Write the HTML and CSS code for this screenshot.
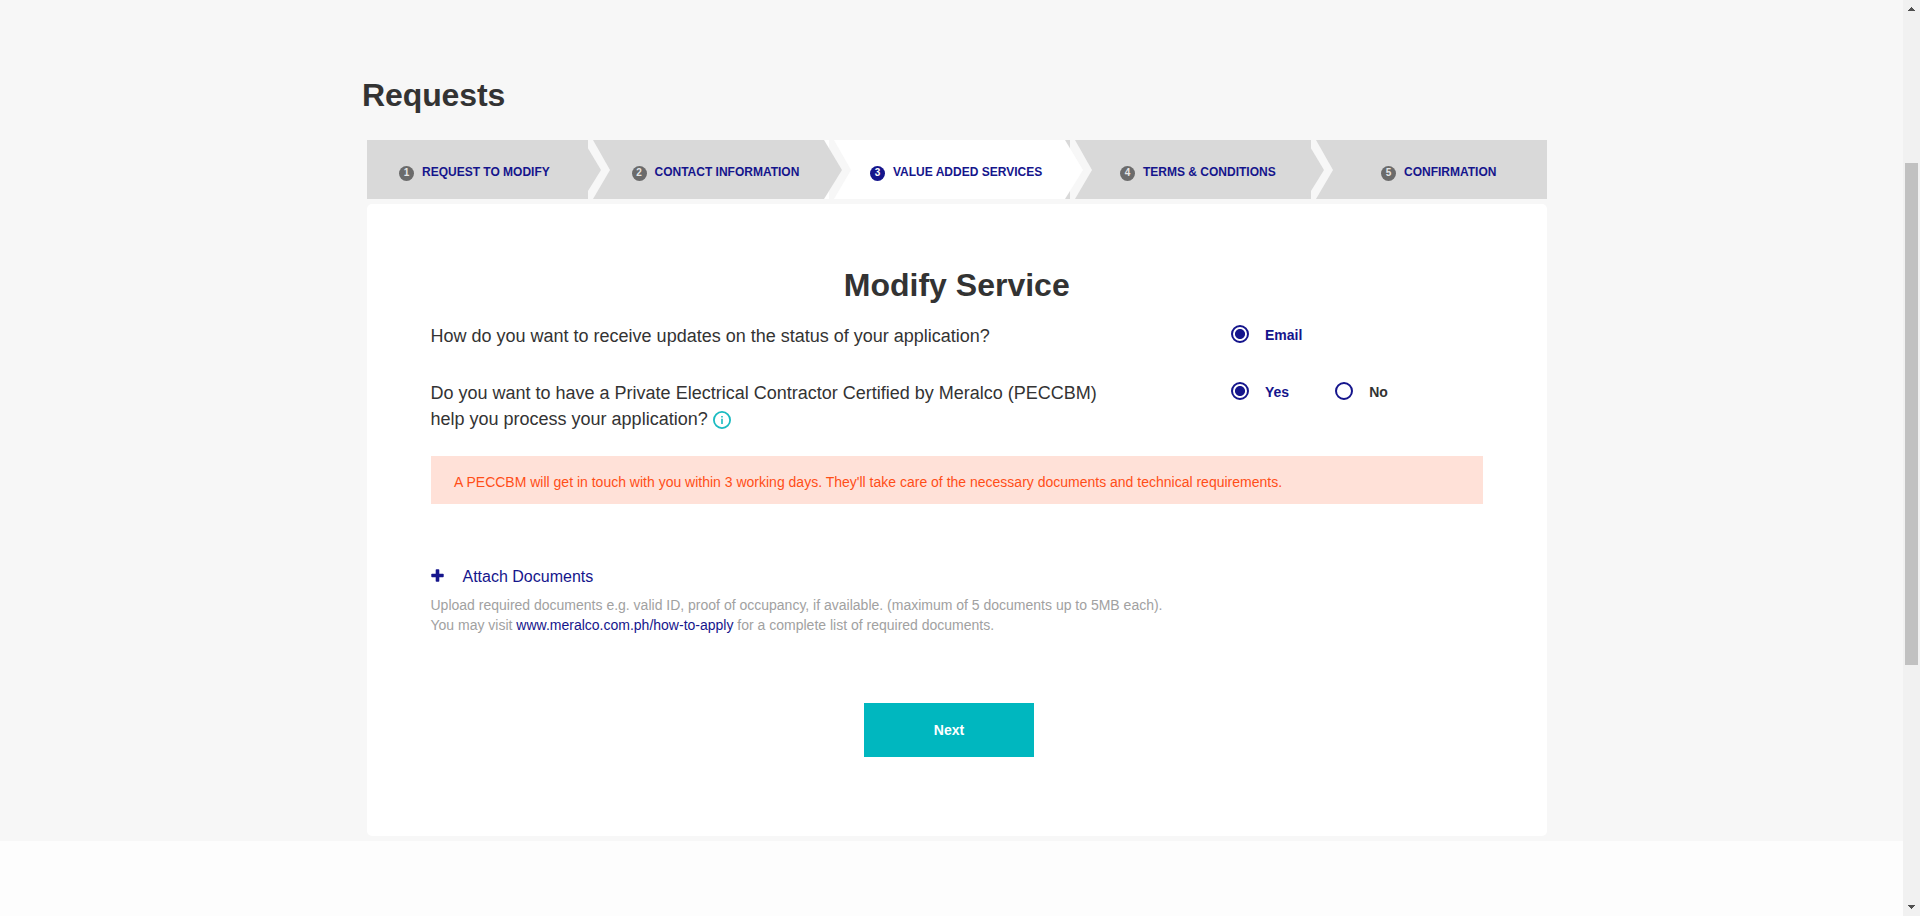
FILE: index.html
```html
<!DOCTYPE html>
<html lang="en">
<head>
<meta charset="utf-8">
<title>Requests</title>
<link rel="stylesheet" href="styles.css">
</head>
<body>
<div class="viewport">
  <div class="page">
    <main class="content">
      <div class="wrap">
        <h1 class="page-title">Requests</h1>
        <ol class="steps">
          <li class="step step-first"><span class="num">1</span><span class="label">REQUEST TO MODIFY</span></li>
          <li class="step step-contact">
            <svg class="arrow" viewBox="0 0 27 59"><path class="gap" d="M5 0H10L27 30L10 59H5Z"/><path class="grey" d="M0 0L18 30L0 59Z"/></svg>
            <span class="num">2</span><span class="label">CONTACT INFORMATION</span></li>
          <li class="step step-value active">
            <svg class="arrow" viewBox="0 0 27 59"><path class="white" d="M0 0H5V59H0Z"/><path class="gap" d="M5 0H10L27 30L10 59H5Z"/><path class="grey" d="M0 0L18 30L0 59Z"/></svg>
            <span class="num">3</span><span class="label">VALUE ADDED SERVICES</span></li>
          <li class="step step-terms">
            <svg class="arrow" viewBox="0 0 27 59"><path class="grey" d="M0 0H5V59H0Z"/><path class="gap" d="M5 0H10L27 30L10 59H5Z"/><path class="white" d="M0 0L18 30L0 59Z"/></svg>
            <span class="num">4</span><span class="label">TERMS &amp; CONDITIONS</span></li>
          <li class="step step-confirm">
            <svg class="arrow" viewBox="0 0 27 59"><path class="gap" d="M5 0H10L27 30L10 59H5Z"/><path class="grey" d="M0 0L18 30L0 59Z"/></svg>
            <span class="num">5</span><span class="label">CONFIRMATION</span></li>
        </ol>
        <section class="card">
          <h2 class="card-title">Modify Service</h2>
          <div class="row">
            <p class="question">How do you want to receive updates on the status of your application?</p>
            <div class="options">
              <label class="option checked"><span class="radio"></span><span class="option-text">Email</span></label>
            </div>
          </div>
          <div class="row row-second">
            <p class="question">Do you want to have a Private Electrical Contractor Certified by Meralco (PECCBM)<br>help you process your application?
              <svg class="info" viewBox="0 0 18 18"><circle cx="9" cy="9" r="8.1"/><path d="M8.2 5h1.6v1.5H8.2zM8.2 7.8h1.6V13H8.2z"/></svg></p>
            <div class="options">
              <label class="option checked"><span class="radio"></span><span class="option-text">Yes</span></label>
              <label class="option"><span class="radio"></span><span class="option-text">No</span></label>
            </div>
          </div>
          <p class="notice">A PECCBM will get in touch with you within 3 working days. They'll take care of the necessary documents and technical requirements.</p>
          <div class="attach">
            <svg class="plus" viewBox="0 0 13 13"><rect x="4.7" y="0.3" width="3.6" height="12.4" rx="0.8"/><rect x="0.3" y="4.7" width="12.4" height="3.6" rx="0.8"/></svg>
            <span>Attach Documents</span>
          </div>
          <p class="hint">Upload required documents e.g. valid ID, proof of occupancy, if available. (maximum of 5 documents up to 5MB each).<br>You may visit <a class="link">www.meralco.com.ph/how-to-apply</a> for a complete list of required documents.</p>
          <button class="next" type="button">Next</button>
        </section>
      </div>
    </main>
  </div>
  <div class="scrollbar">
    <svg class="scroll-arrow" viewBox="0 0 7 4" shape-rendering="crispEdges"><path d="M3 0h1v1h1v1h1v1h1v1H0V3h1V2h1V1h1z"/></svg>
    <div class="thumb"></div>
    <svg class="scroll-arrow down" viewBox="0 0 7 4" shape-rendering="crispEdges"><path d="M0 0h7v1H6v1H5v1H4v1H3V3H2V2H1V1H0z"/></svg>
  </div>
</div>
</body>
</html>
```
FILE: styles.css
```css
* { box-sizing: border-box; }
body { margin: 0; overflow: hidden; background: #fdfdfd; color: #333; font-family: "Liberation Sans", Arial, sans-serif; }
h1, h2, p, ol { margin: 0; padding: 0; }
.viewport { display: flex; height: 916px; }
.page { flex: 1; }
.content { height: 841px; background: #f7f7f7; }
.wrap { width: 1180px; margin-left: 367px; padding-top: 76px; }
.page-title { margin-left: -5px; font-size: 32px; line-height: 38px; letter-spacing: -0.1px; }
.steps { display: flex; height: 59px; margin-top: 26px; list-style: none; }
.step { position: relative; display: flex; align-items: flex-start; padding-top: 25px; width: 241px; background: #d9d9d9; color: #15158c; font-size: 12px; font-weight: bold; line-height: 14px; white-space: nowrap; }
.step-first { width: 221px; padding-left: 32px; }
.step-contact { padding-left: 43.5px; }
.step-value { padding-left: 41px; }
.step-terms { padding-left: 50px; }
.step-confirm { width: 236px; padding-left: 70px; }
.active { background: #fff; }
.num { width: 15px; height: 15px; margin: 1px 8px 0 0; border-radius: 50%; background: #6b6b6b; color: #e6e6e6; font-size: 10px; line-height: 14px; text-align: center; }
.active .num { background: #15158c; color: #fff; }
.arrow { position: absolute; top: 0; left: -5px; width: 27px; height: 59px; }
.gap { fill: #f7f7f7; }
.grey { fill: #d9d9d9; }
.white { fill: #fff; }
.card { height: 632px; margin-top: 5px; padding: 62px 64px 0 63.5px; border-radius: 5px; background: #fff; }
.card-title { font-size: 32px; line-height: 38px; text-align: center; }
.row { display: flex; margin-top: 19px; }
.row-second { margin-top: 31px; }
.question { width: 800.5px; font-size: 18px; line-height: 26px; }
.info { width: 18px; height: 18px; vertical-align: -4px; }
.info circle { fill: none; stroke: #1abbc1; stroke-width: 1.8; }
.info path { fill: #1abbc1; }
.options { display: flex; gap: 46px; }
.option { display: flex; align-items: flex-start; gap: 16px; font-size: 14px; font-weight: bold; line-height: 16px; }
.option-text { margin-top: 4px; }
.checked { color: #15158c; }
.radio { width: 18px; height: 18px; margin-top: 2px; border: 2px solid #15158c; border-radius: 50%; }
.checked .radio { background: radial-gradient(circle, #15158c 4.6px, transparent 5.4px); }
.notice { height: 48px; margin: 24px 0 0 0.5px; padding: 2px 23px 0; background: #ffe1d8; color: #ff4e17; font-size: 14px; line-height: 48px; }
.attach { display: flex; align-items: center; gap: 19px; margin-top: 63px; color: #15158c; font-size: 16px; line-height: 20px; }
.plus { width: 13px; height: 13px; margin-top: -3px; fill: #15158c; }
.hint { margin-top: 8px; color: #a1a1a1; font-size: 14px; line-height: 20px; }
.link { color: #15158c; }
.next { display: block; width: 170px; height: 54px; margin: 68px 0 0 433.5px; padding: 0; border: 0; background: #00b7bf; color: #fff; font: bold 14px "Liberation Sans", Arial, sans-serif; }
.scrollbar { display: flex; flex-direction: column; align-items: center; width: 17px; padding: 7px 0; background: #f1f1f1; }
.scroll-arrow { width: 7px; height: 4px; fill: #505050; }
.thumb { width: 13px; height: 502px; margin-top: 152px; background: #c1c1c1; }
.down { margin-top: auto; }
```
